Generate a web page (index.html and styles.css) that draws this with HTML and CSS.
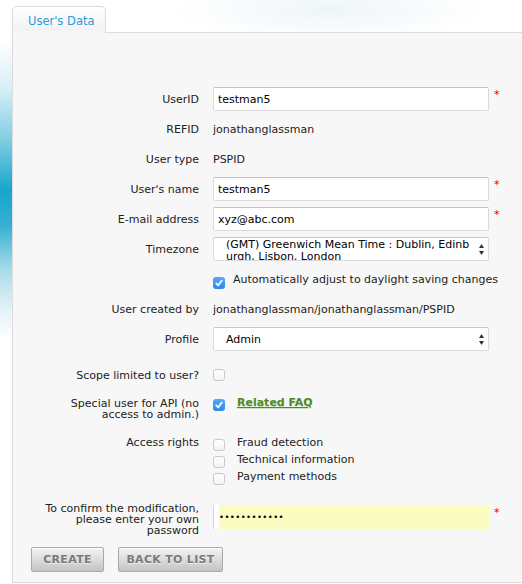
FILE: index.html
```html
<!DOCTYPE html>
<html lang="en">
<head>
<meta charset="utf-8">
<title>User's Data</title>
<link rel="stylesheet" href="styles.css">
</head>
<body>
<div class="page">
  <div class="tab">User's Data</div>
  <div class="panel">
    <form class="form">
      <div class="row">
        <label class="lbl">UserID</label>
        <input class="input" type="text" value="testman5">
        <span class="req">*</span>
      </div>
      <div class="row">
        <span class="lbl">REFID</span>
        <span class="val">jonathanglassman</span>
      </div>
      <div class="row">
        <span class="lbl">User type</span>
        <span class="val">PSPID</span>
      </div>
      <div class="row">
        <label class="lbl">User's name</label>
        <input class="input" type="text" value="testman5">
        <span class="req">*</span>
      </div>
      <div class="row">
        <label class="lbl">E-mail address</label>
        <input class="input" type="text" value="xyz@abc.com">
        <span class="req">*</span>
      </div>
      <div class="row">
        <label class="lbl">Timezone</label>
        <div class="select">
          <div class="select-text multi">
            <div class="line">(GMT) Greenwich Mean Time : Dublin, Edinb</div>
            <div class="line">urgh, Lisbon, London</div>
          </div>
          <svg class="arrows" width="5" height="11" viewBox="0 0 5 11"><path d="M2.5 0 L5 4 L0 4 Z M0 7 L5 7 L2.5 11 Z" fill="#333"/></svg>
        </div>
      </div>
      <div class="row">
        <span class="lbl"></span>
        <span class="cb on dst"><svg width="12" height="12" viewBox="0 0 12 12"><path d="M3.2 6.4 L5.2 8.4 L8.8 3.6" fill="none" stroke="#fff" stroke-width="1.7" stroke-linecap="round" stroke-linejoin="round"/></svg></span>
        <span class="cb-text">Automatically adjust to daylight saving changes</span>
      </div>
      <div class="row">
        <span class="lbl">User created by</span>
        <span class="val">jonathanglassman/jonathanglassman/PSPID</span>
      </div>
      <div class="row">
        <label class="lbl">Profile</label>
        <div class="select">
          <div class="select-text">Admin</div>
          <svg class="arrows" width="5" height="11" viewBox="0 0 5 11"><path d="M2.5 0 L5 4 L0 4 Z M0 7 L5 7 L2.5 11 Z" fill="#333"/></svg>
        </div>
      </div>
      <div class="row scope">
        <span class="lbl">Scope limited to user?</span>
        <span class="cb"></span>
      </div>
      <div class="row top special">
        <span class="lbl tight">Special user for API (no<br>access to admin.)</span>
        <span class="cb on first"><svg width="12" height="12" viewBox="0 0 12 12"><path d="M3.2 6.4 L5.2 8.4 L8.8 3.6" fill="none" stroke="#fff" stroke-width="1.7" stroke-linecap="round" stroke-linejoin="round"/></svg></span>
        <a class="faq" href="#">Related FAQ</a>
      </div>
      <div class="row top access">
        <span class="lbl tight">Access rights</span>
        <div class="opts">
          <div class="opt"><span class="cb"></span><span class="opt-text">Fraud detection</span></div>
          <div class="opt"><span class="cb"></span><span class="opt-text">Technical information</span></div>
          <div class="opt"><span class="cb"></span><span class="opt-text">Payment methods</span></div>
        </div>
      </div>
      <div class="row top confirm">
        <label class="lbl tight">To confirm the modification,<br>please enter your own<br>password</label>
        <input class="input pwd" type="password" value="xxxxxxxxxxxx">
        <span class="req low">*</span>
      </div>
    </form>
    <div class="buttons">
      <button class="btn create" type="button">Create</button>
      <button class="btn back" type="button">Back to list</button>
    </div>
  </div>
</div>
</body>
</html>
```

FILE: styles.css
```css
html {
  overflow: hidden;
}

body {
  margin: 0;
  font-family: "DejaVu Sans", Verdana, sans-serif;
  font-size: 11px;
  color: #222;
  background:
    linear-gradient(to bottom,
      rgba(255,255,255,0) 40px,
      #d6eef6 90px,
      #7fcde3 140px,
      #17a6cc 190px,
      #35b0d3 225px,
      #a9dcec 270px,
      #e4f3f8 310px,
      rgba(255,255,255,0) 340px) no-repeat 0 0 / 12px 584px,
    radial-gradient(ellipse 160px 30px at 330px 10px, #eef5f9, rgba(255,255,255,0)) no-repeat,
    #fff;
}

.page {
  padding: 6px 0 0 12px;
}

.tab {
  position: relative;
  z-index: 1;
  box-sizing: border-box;
  width: 94px;
  height: 27px;
  margin-bottom: -1px;
  padding-left: 15px;
  border: 1px solid #dcdcdc;
  border-bottom: none;
  border-radius: 5px 5px 0 0;
  background: linear-gradient(#ffffff, #f3f3f3 85%, #f7f7f7);
  color: #2a9bd6;
  font-size: 11.5px;
  line-height: 28px;
}

.panel {
  margin-right: -40px;
  padding: 54px 0 10px 16px;
  border-top: 1px solid #dcdcdc;
  border-left: 1px solid #dcdcdc;
  border-bottom: 1px solid #dcdcdc;
  background: #f7f7f7;
}

.form {
  margin: 0;
}

.row {
  display: flex;
  align-items: center;
  height: 24px;
  margin-bottom: 6px;
}

.row.top {
  align-items: flex-start;
  height: auto;
}

.row.scope {
  margin-top: 12px;
  margin-bottom: 11px;
}

.row.special {
  margin-bottom: 17px;
}

.row.access {
  margin-bottom: 15px;
}

.row.confirm {
  margin-bottom: 11px;
}

.lbl {
  flex-shrink: 0;
  width: 170px;
  margin-right: 14px;
  text-align: right;
  white-space: nowrap;
}

.lbl.tight {
  line-height: 11px;
}

.val {
  color: #222;
}

.input {
  box-sizing: border-box;
  flex-shrink: 0;
  width: 276px;
  height: 24px;
  margin: 0;
  padding: 0 4px;
  border: 1px solid #dadada;
  border-top-color: #c2c2c2;
  border-radius: 2px;
  background: #fff;
  color: #000;
  font-family: inherit;
  font-size: 11px;
  outline: none;
}

.input.pwd {
  margin-top: 2px;
  padding-left: 5px;
  border: none;
  border-left: 1px solid #d6d6d6;
  border-radius: 0;
  background: linear-gradient(to right, #fff 5px, #fafcc0 5px);
  font-size: 8.5px;
  letter-spacing: 0.4px;
}

.req {
  align-self: flex-start;
  margin-top: 2px;
  margin-left: 5px;
  color: #d60000;
  font-size: 11px;
  line-height: 11px;
}

.req.low {
  margin-top: 4px;
}

.select {
  box-sizing: border-box;
  display: flex;
  align-items: center;
  flex-shrink: 0;
  width: 276px;
  height: 24px;
  padding-left: 12px;
  border: 1px solid #dadada;
  border-top-color: #c8c8c8;
  border-radius: 2px;
  background: #fff;
  overflow: hidden;
  color: #000;
}

.select-text {
  flex: 1;
  min-width: 0;
  white-space: nowrap;
  overflow: hidden;
}

.select-text.multi {
  align-self: flex-start;
  height: 22px;
  padding-top: 1px;
  padding-right: 2px;
  line-height: 12px;
}

.line {
  white-space: nowrap;
  overflow: hidden;
}

.arrows {
  flex-shrink: 0;
  margin-right: 4px;
  margin-left: 5px;
}

.cb {
  box-sizing: border-box;
  display: inline-flex;
  flex-shrink: 0;
  width: 12px;
  height: 12px;
  border: 1px solid #c9c9c9;
  border-radius: 3px;
  background: linear-gradient(#ffffff, #f3f3f3);
}

.cb.on {
  border: none;
  background: linear-gradient(#5aa6f7, #2f86ee);
}

.cb.dst {
  margin-top: 7px;
}

.cb.first {
  margin-top: 1px;
}

.cb-text {
  margin-left: 8px;
}

.faq {
  margin-top: -1px;
  margin-left: 12px;
  color: #4e8b28;
  font-size: 11px;
  font-weight: bold;
  line-height: 12px;
  text-decoration: underline;
  text-shadow: 0 1px 0 rgba(140, 180, 110, 0.35);
}

.opts {
  display: flex;
  flex-direction: column;
}

.opt {
  display: flex;
  align-items: flex-start;
  height: 17px;
}

.opt .cb {
  margin-top: 2px;
}

.opt-text {
  margin-left: 12px;
  line-height: 11px;
}

.buttons {
  display: flex;
  gap: 14px;
  margin-left: 2px;
}

.btn {
  box-sizing: border-box;
  height: 25px;
  margin: 0;
  padding: 0;
  border: 1px solid #a9a9a9;
  border-radius: 2px;
  background: linear-gradient(#f3f3f3, #dcdcdc 50%, #c3c3c3);
  box-shadow: inset 0 1px 0 #fff;
  color: #7a7a7a;
  font-family: "DejaVu Sans", Verdana, sans-serif;
  font-size: 11px;
  font-weight: bold;
  letter-spacing: 0.3px;
  text-transform: uppercase;
  text-shadow: 0 1px 0 rgba(255,255,255,0.6);
}

.btn.create {
  width: 73px;
}

.btn.back {
  width: 105px;
}
```
